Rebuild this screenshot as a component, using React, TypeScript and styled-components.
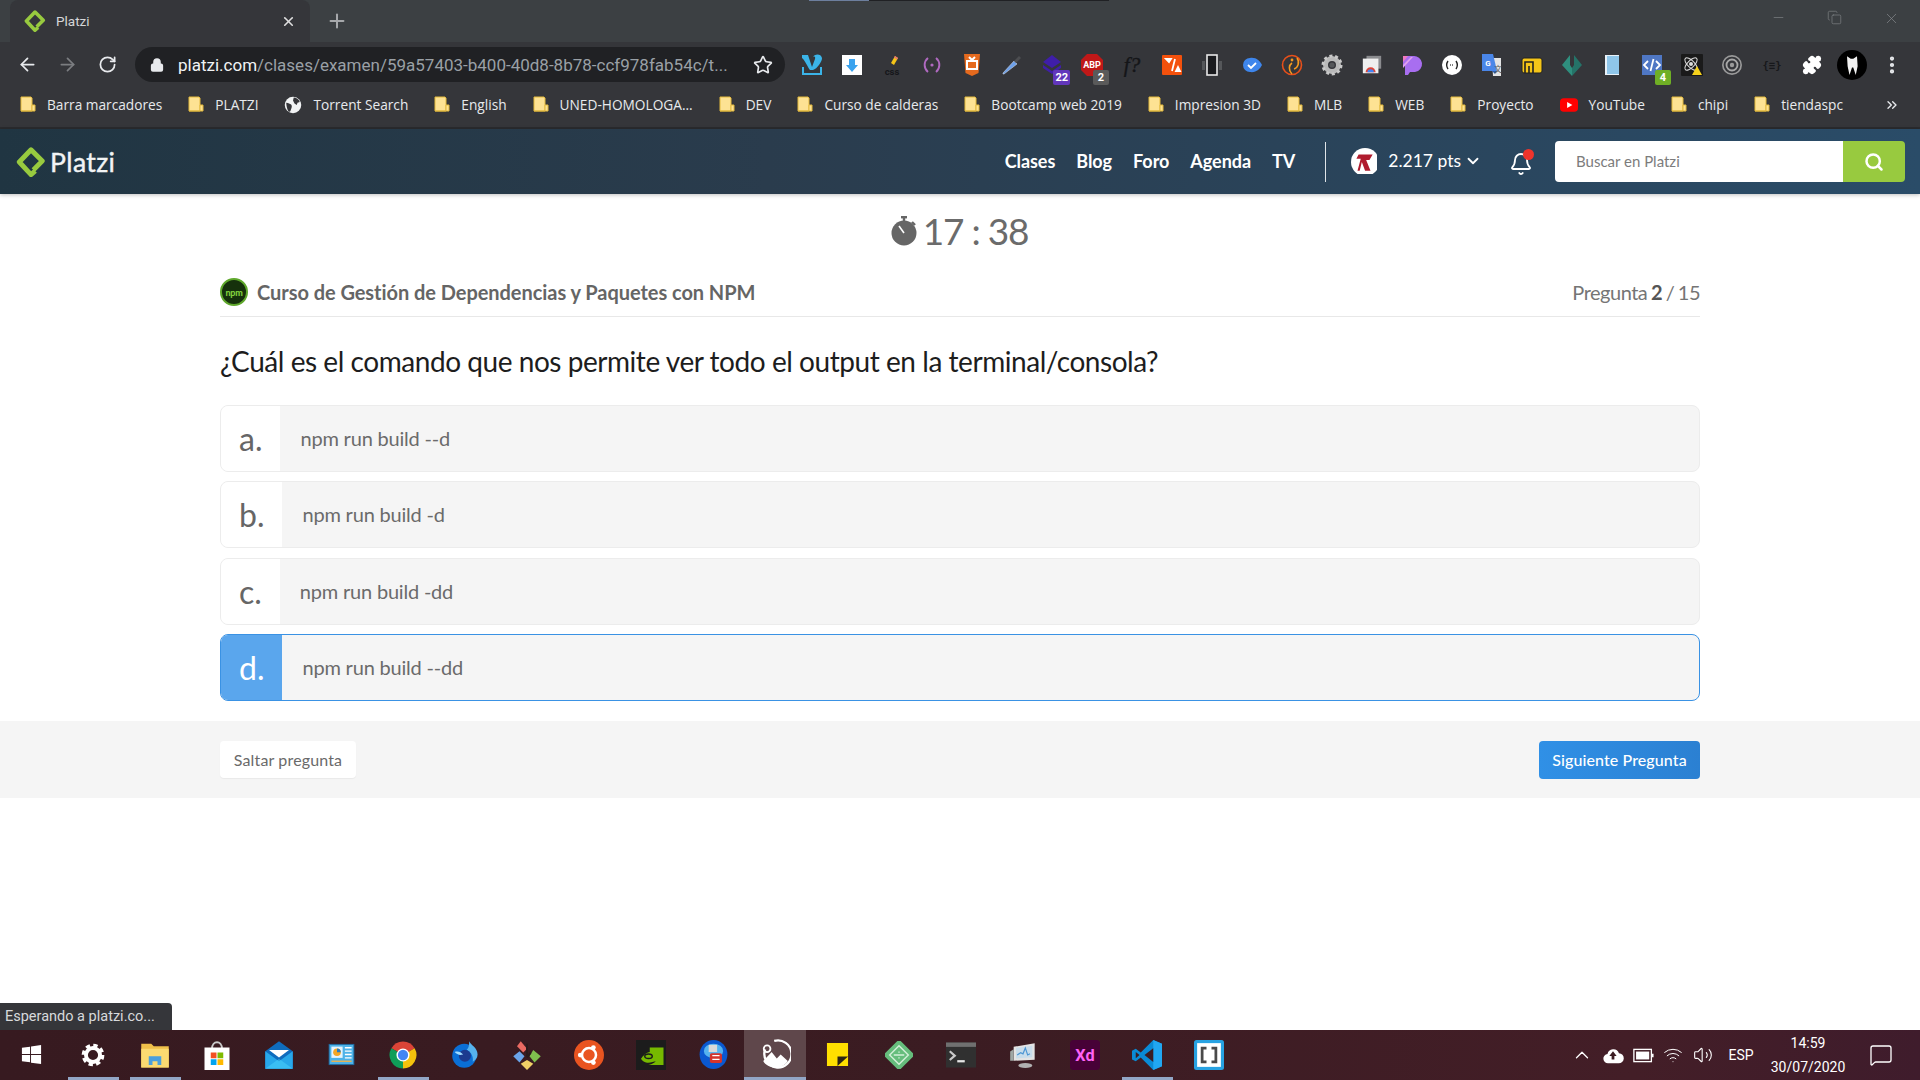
import React from "react";
import styled, { createGlobalStyle } from "styled-components";
import { ArrowLeft, ArrowRight, RotateCw, Lock, Star, Plus, X, Minus, Copy, ChevronDown, Bell, Search, Puzzle, MoreVertical, ChevronsRight, ChevronUp, Volume2, Wifi, MessageSquare } from "lucide-react";

const Global = createGlobalStyle`
  html, body { margin: 0; padding: 0; width: 1920px; height: 1080px; overflow: hidden; background: #fff; }
  * { box-sizing: border-box; }
  #root { width: 1920px; height: 1080px; }
`;

const Screen = styled.div`
  position: relative;
  width: 1920px;
  height: 1080px;
  display: flex;
  flex-direction: column;
  font-family: Lato, "Open Sans", sans-serif;
  background: #fff;
`;

const TabStrip = styled.div`
  position: relative;
  height: 42px;
  flex: none;
  background: #3c4043;
  display: flex;
  align-items: flex-end;
  padding-left: 10px;
`;

const LoadBar = styled.div`
  position: absolute;
  top: 0;
  left: 809px;
  width: 300px;
  height: 1px;
  background: linear-gradient(90deg, #6d7f9e 0 60px, #202124 60px);
`;

const Tab = styled.div`
  width: 300px;
  height: 42px;
  background: #35363a;
  border-radius: 8px 8px 0 0;
  display: flex;
  align-items: center;
  padding: 0 14px 0 14px;
  color: #d5d6d8;
  font-family: Roboto, sans-serif;
  font-size: 13.5px;
`;

const TabTitle = styled.span`
  flex: 1;
  margin-left: 10px;
`;

const NewTab = styled.div`
  margin-left: 16px;
  height: 42px;
  display: flex;
  align-items: center;
  color: #a6a8ab;
`;

const WindowControls = styled.div`
  margin-left: auto;
  height: 42px;
  display: flex;
  align-items: flex-start;
  color: #85888c;
  padding: 10px 20px 0 0;
  gap: 41px;
`;

const Toolbar = styled.div`
  height: 45px;
  flex: none;
  background: #35363a;
  display: flex;
  align-items: center;
  padding-left: 15px;
`;

const NavBtn = styled.div<{ $dim?: boolean }>`
  width: 24px;
  height: 24px;
  margin-right: 16px;
  display: flex;
  align-items: center;
  justify-content: center;
  color: ${(p) => (p.$dim ? "#7b7d80" : "#e8eaed")};
`;

const Omnibox = styled.div`
  width: 650px;
  height: 35px;
  border-radius: 18px;
  background: #202124;
  display: flex;
  align-items: center;
  padding: 0 12px 0 15px;
  font-family: Roboto, sans-serif;
  font-size: 17px;
  color: #9aa0a6;
  white-space: nowrap;
`;

const Url = styled.span`
  margin-left: 14px;
  flex: 1;
  overflow: hidden;
  b { font-weight: 400; color: #f1f3f4; }
`;

const Extensions = styled.div`
  display: flex;
  margin-left: 7px;
`;

const ExtSlot = styled.div`
  position: relative;
  width: 40px;
  height: 45px;
  display: flex;
  align-items: center;
  justify-content: center;
  color: #e8eaed;
`;

const Badge = styled.span<{ $bg: string; $right?: number }>`
  position: absolute;
  right: ${(p) => p.$right ?? 2}px;
  bottom: 2px;
  min-width: 16px;
  height: 15px;
  padding: 0 2px;
  border-radius: 2px;
  background: ${(p) => p.$bg};
  color: #fff;
  font-family: Roboto, sans-serif;
  font-size: 11px;
  font-weight: 700;
  line-height: 15px;
  text-align: center;
`;

const BookmarksBar = styled.div`
  height: 40px;
  flex: none;
  background: #35363a;
  display: flex;
  align-items: center;
  padding: 0 0 5px 20px;
  gap: 26px;
  font-family: "Open Sans", sans-serif;
  font-size: 13.7px;
  color: #e8eaed;
  white-space: nowrap;
`;

const Bookmark = styled.div`
  display: flex;
  align-items: center;
  gap: 11px;
`;

const BookmarkMore = styled.div`
  margin-left: auto;
  margin-right: 20px;
  display: flex;
  color: #e8eaed;
`;

const ChromeLine = styled.div`
  height: 2px;
  flex: none;
  background: #2a2b2e;
`;

const SiteHeader = styled.header`
  height: 65px;
  flex: none;
  display: flex;
  align-items: center;
  padding: 0 15px 0 16px;
  background: linear-gradient(90deg, #203542 0%, #2a3c4d 40%, #2a4c68 100%);
  box-shadow: 0 1px 4px rgba(0, 0, 0, 0.25);
  position: relative;
  color: #fff;
`;

const Brand = styled.div`
  display: flex;
  align-items: center;
  gap: 4px;
  font-size: 26.5px;
  font-weight: 400;
  color: #f2f4f5;
  letter-spacing: 0.4px;
  -webkit-text-stroke: 0.4px #f2f4f5;
`;

const SiteNav = styled.nav`
  margin-left: auto;
  margin-bottom: 2px;
  display: flex;
  gap: 21px;
  font-size: 18px;
  font-weight: 700;
  letter-spacing: -0.05px;
`;

const HeaderDivider = styled.div`
  width: 1px;
  height: 40px;
  margin: 0 25px 0 30px;
  background: #dfe4e8;
`;

const Points = styled.div`
  display: flex;
  align-items: center;
  font-size: 17.5px;
  gap: 11px;
  margin-bottom: 2px;
`;

const PointsValue = styled.span`
  display: flex;
  align-items: center;
  gap: 3px;
`;

const BellWrap = styled.div`
  position: relative;
  margin: 0 22px 0 27px;
  width: 24px;
  height: 28px;
  display: flex;
  align-items: flex-end;
  justify-content: center;
`;

const BellDot = styled.span`
  position: absolute;
  right: -1px;
  top: 1px;
  width: 11px;
  height: 11px;
  border-radius: 50%;
  background: #f0342c;
`;

const SearchBox = styled.div`
  width: 350px;
  height: 41px;
  display: flex;
  border-radius: 4px;
  overflow: hidden;
`;

const SearchInput = styled.div`
  flex: 1;
  background: #fff;
  color: #7c7c7c;
  font-size: 15px;
  display: flex;
  align-items: center;
  padding-left: 21px;
  padding-bottom: 1px;
`;

const SearchBtn = styled.div`
  width: 62px;
  background: #98ca3f;
  display: flex;
  align-items: center;
  justify-content: center;
  color: #fff;
`;

const Main = styled.main`
  flex: 1;
  min-height: 0;
  display: flex;
  flex-direction: column;
`;

const Timer = styled.div`
  height: 75px;
  padding-top: 12px;
  display: flex;
  justify-content: center;
  align-items: flex-start;
  gap: 5px;
  font-size: 37px;
  line-height: 50px;
  letter-spacing: -1.2px;
  color: #6b6b6b;
  margin-left: -2px;
`;

const TimerIcon = styled.div`
  padding-top: 1px;
  height: 50px;
`;

const Container = styled.div`
  width: 1480px;
  margin: 0 auto;
`;

const CourseRow = styled.div`
  height: 48px;
  display: flex;
  align-items: center;
  justify-content: space-between;
  border-bottom: 1px solid #e8e8e8;
  padding-bottom: 1px;
`;

const CourseName = styled.div`
  display: flex;
  align-items: center;
  gap: 9px;
  font-size: 20px;
  font-weight: 700;
  color: #656565;
  letter-spacing: -0.05px;
`;

const NpmBadge = styled.span`
  width: 28px;
  height: 28px;
  border-radius: 50%;
  background: #16310c;
  border: 2px solid #5fa82c;
  color: #7fce3c;
  font-size: 9px;
  font-weight: 900;
  letter-spacing: -0.2px;
  display: flex;
  align-items: center;
  justify-content: center;
`;

const Progress = styled.div`
  font-size: 20px;
  color: #757575;
  letter-spacing: -0.5px;
  word-spacing: -1px;
  b { color: #555; }
`;

const Question = styled.h1`
  margin: 0;
  height: 88px;
  padding-top: 23px;
  font-size: 28px;
  line-height: 42px;
  font-weight: 400;
  color: #1d1d1d;
  letter-spacing: -0.45px;
`;

const Options = styled.div`
  display: flex;
  flex-direction: column;
  gap: 9.3px;
`;

const Option = styled.div<{ $selected?: boolean }>`
  height: 67px;
  display: flex;
  background: #f5f5f5;
  border: 1px solid ${(p) => (p.$selected ? "#3a92e4" : "#ececec")};
  border-radius: 8px;
  overflow: hidden;
`;

const Letter = styled.div<{ $selected?: boolean }>`
  padding: 0 18px;
  display: flex;
  align-items: center;
  justify-content: center;
  font-size: 32px;
  color: ${(p) => (p.$selected ? "#fff" : "#666")};
  background: ${(p) => (p.$selected ? "#5aa6ed" : "#fff")};
`;

const Answer = styled.div`
  flex: 1;
  display: flex;
  align-items: center;
  padding: 0 0 1px 20px;
  font-size: 20px;
  letter-spacing: -0.2px;
  color: #6b6b6b;
`;

const Footer = styled.div`
  margin-top: 20px;
  height: 77px;
  background: #f5f5f5;
  display: flex;
  align-items: flex-start;
`;

const FooterInner = styled(Container)`
  padding-top: 20px;
  display: flex;
  justify-content: space-between;
  align-items: flex-start;
`;

const SkipBtn = styled.div`
  width: 136px;
  height: 37px;
  background: #fff;
  border-radius: 4px;
  box-shadow: 0 1px 1px rgba(0, 0, 0, 0.05);
  font-size: 16px;
  letter-spacing: 0.15px;
  color: #6a6a6a;
  display: flex;
  align-items: center;
  justify-content: center;
`;

const NextBtn = styled.div`
  width: 161px;
  height: 38px;
  background: linear-gradient(90deg, #3090e6, #2b80d2);
  border-radius: 4px;
  font-size: 16px;
  font-weight: 500;
  letter-spacing: 0.1px;
  color: #fff;
  display: flex;
  align-items: center;
  justify-content: center;
`;

const StatusBubble = styled.div`
  position: absolute;
  left: 0;
  bottom: 50px;
  width: 172px;
  height: 27px;
  background: #35363a;
  border-radius: 0 4px 0 0;
  color: #d8dadc;
  font-family: Roboto, sans-serif;
  font-size: 14.5px;
  line-height: 27px;
  padding-left: 5px;
  white-space: nowrap;
`;

const Taskbar = styled.footer`
  height: 50px;
  flex: none;
  display: flex;
  background: linear-gradient(90deg, #371a20 0%, #3b1c22 50%, #431e27 85%, #3f1c2c 100%);
  color: #fff;
`;

const TaskSlot = styled.div<{ $open?: boolean; $active?: boolean }>`
  position: relative;
  width: 62px;
  height: 50px;
  display: flex;
  align-items: center;
  justify-content: center;
  padding-bottom: 1px;
  background: ${(p) => (p.$active ? "#5f474b" : "transparent")};
  &::after {
    content: "";
    display: ${(p) => (p.$open || p.$active ? "block" : "none")};
    position: absolute;
    left: ${(p) => (p.$active ? 0 : 5.5)}px;
    right: ${(p) => (p.$active ? 0 : 5.5)}px;
    bottom: 0;
    height: 3px;
    background: #92a6c6;
  }
`;

const Tray = styled.div`
  margin-left: auto;
  display: flex;
  align-items: center;
  color: #fff;
  padding-right: 27px;
`;

const TrayIcon = styled.div<{ $w: number }>`
  width: ${(p) => p.$w}px;
  display: flex;
  justify-content: center;
`;

const TrayLang = styled.div`
  width: 46px;
  text-align: center;
  font-family: Roboto, sans-serif;
  font-size: 14px;
`;

const Clock = styled.div`
  width: 88px;
  text-align: center;
  font-family: Roboto, sans-serif;
  font-size: 14px;
  line-height: 24px;
`;

const Notif = styled.div`
  margin-left: 17px;
  display: flex;
`;

const Folder = () => (
  <svg width="16" height="18" viewBox="0 0 16 18">
    <path d="M1 1h10l1 1v13H1z" fill="#fde293" stroke="#e3b93c" strokeWidth="1" />
    <path d="M1 15h14V9h-3v6" fill="#fde293" stroke="#e3b93c" strokeWidth="1" />
  </svg>
);

const PlatziMark = ({ size }: { size: number }) => (
  <svg width={size} height={size} viewBox="0 0 32 32">
    <path d="M20.5 25.5 16 29.5 3.5 16 16 3 28 15 18.5 24.5" fill="none" stroke="#98ca3f" strokeWidth="5.2" strokeLinejoin="round" />
  </svg>
);

const S = (c: React.ReactNode, size = 24) => (
  <svg width={size} height={size} viewBox="0 0 24 24">{c}</svg>
);

const extIcons: React.ReactNode[] = [
  S(<><path d="M2 2h6l4 12 3-8c.6-2-.3-3-2-2 1-3 8-4 9 1 .5 3-5 11-9 12h-3C8 15 5 7 2 5z" fill="#3bb4e8" /><path d="M2 14v8h20v-8h-2v6H4v-6z" fill="#3bb4e8" /></>),
  S(<><rect x="2" y="2" width="20" height="20" fill="#fff" /><path d="M9 6h6v6h3l-6 7-6-7h3z" fill="#3aa3ee" /></>),
  S(<><path d="M15 3l3 2-4 7-3-2z" fill="#f5c518" /><path d="M15 3l3 2-1 1.5-3-2z" fill="#e57373" /><text x="12" y="22" fontFamily="Roboto" fontSize="9.5" fontWeight="700" fill="#15161a" textAnchor="middle">css</text></>),
  S(<><circle cx="12" cy="12" r="1.6" fill="#b06ac0" /><path d="M8 5a9 9 0 0 0 0 14M16 5a9 9 0 0 1 0 14" stroke="#b06ac0" strokeWidth="1.9" fill="none" /></>),
  S(<><path d="M4 1h16l-1.5 19L12 23l-6.5-3z" fill="#e56a1e" /><rect x="7" y="8" width="10" height="8" fill="none" stroke="#fff" strokeWidth="2" /><path d="M9 4l3 3 3-3" stroke="#fff" strokeWidth="2" fill="none" /></>),
  S(<><path d="M4 21l-1 0 0-1 11-12 3 3z" fill="#6da0ea" stroke="#c8d4e4" strokeWidth=".6" /><path d="M14 8l5-5 2 2-5 5z" fill="#4c4d50" /></>),
  S(<><path d="M12 2 21 9l-9 6-9-6z" fill="#3f1ea8" /><path d="M3 12l9 6 9-6v3l-9 6-9-6z" fill="#3f1ea8" /></>),
  S(<><path d="M7 1h10l6 6v10l-6 6H7l-6-6V7z" fill="#c01818" /><text x="12" y="15" fontFamily="Roboto" fontSize="9" fontWeight="700" fill="#fff" textAnchor="middle">ABP</text></>),
  S(<text x="12" y="19" fontFamily="Liberation Serif" fontStyle="italic" fontSize="21" fill="#141518" stroke="#141518" strokeWidth=".35" textAnchor="middle">f?</text>),
  S(<><rect x="2" y="2" width="20" height="20" rx="1" fill="#f4510c" /><path d="M6 6h5l-2 3zM12 18l3-12M16 18h4l-2-4z" stroke="#fff" strokeWidth="1.8" fill="none" /></>),
  S(<><rect x="7" y="2" width="10" height="20" fill="#1a1b1e" stroke="#e8e8e8" strokeWidth="1.6" /><rect x="2" y="8" width="3" height="9" fill="#55575a" /><rect x="19" y="8" width="3" height="9" fill="#55575a" /></>),
  S(<><path d="M10 5c6-1 10 3 12 7-2 4-6 8-12 7a7 7 0 0 1 0-14z" fill="#3e86ec" /><path d="M8 12l3 3 5-5" stroke="#fff" strokeWidth="1.8" fill="none" /></>),
  S(<><circle cx="12" cy="12" r="9.5" fill="none" stroke="#e8501a" strokeWidth="1.6" /><path d="M12 21c-4-4-3-9 0-11M17 5c3 4 1 10-3 11" fill="none" stroke="#f59a1f" strokeWidth="1.6" /><circle cx="12" cy="7" r="1.4" fill="#f59a1f" /></>),
  S(<><circle cx="12" cy="12" r="6.5" fill="none" stroke="#b9b9b9" strokeWidth="5" /><circle cx="12" cy="12" r="9" fill="none" stroke="#c9c9c9" strokeWidth="3" strokeDasharray="3 2.65" /><circle cx="12" cy="12" r="2.6" fill="#55575a" /></>),
  S(<><rect x="6" y="2" width="16" height="14" fill="#8a8b8e" /><rect x="2" y="5" width="17" height="16" fill="#efefef" /><path d="M5 20a5.5 5.5 0 0 1 11 0z" fill="#db4437" /><path d="M7 20a3.5 3.5 0 0 1 7 0z" fill="#4285f4" /></>, 22),
  S(<><path d="M3 3h10a8 8 0 0 1 2 16H10l-2 3H5V12H3z" fill="#a86ef0" /><path d="M3 3h5L3 9z" fill="#f07ac0" /><path d="M3 12l8-8h2L3 15z" fill="#e0a0f0" /></>),
  S(<><circle cx="12" cy="12" r="10" fill="#fff" /><path d="M8 8c-2 3-2 5 0 8M16 8c2 3 2 5 0 8" stroke="#222" strokeWidth="1.4" fill="none" /><path d="M10 12h4" stroke="#555" strokeWidth="1.6" strokeDasharray="1 1" /></>),
  S(<><path d="M12 5h9v18h-8z" fill="#e4e4e4" /><path d="M2 1h11l4 17H2z" fill="#4a86e8" /><path d="M15 21l-3-3h5z" fill="#2d5fb6" /><text x="8" y="13" fontFamily="Roboto" fontSize="8" fontWeight="700" fill="#fff" textAnchor="middle">G</text><text x="18" y="19" fontFamily="Noto Sans CJK SC" fontSize="7.5" fill="#555" textAnchor="middle">文</text></>),
  S(<><rect x="2" y="5" width="20" height="15" rx="2" fill="#f5c518" stroke="#222" strokeWidth="1" /><path d="M5 20V9h8v11M9 20v-7" stroke="#222" strokeWidth="1.6" fill="none" /></>),
  S(<><path d="M10 2 2 12l10 11V15l-2-3z" fill="#2f8f7e" /><path d="M14 2l8 10-10 11V15l2-3z" fill="#257368" /></>),
  S(<><rect x="5" y="2" width="14" height="20" fill="#e8f1f8" /><rect x="7" y="3" width="12" height="18" fill="#8fc6ea" /></>),
  S(<><rect x="2" y="2" width="20" height="20" fill="#4f77c4" /><path d="M8 8l-4 4 4 4M16 8l4 4-4 4M13.5 6l-3 12" stroke="#fff" strokeWidth="1.8" fill="none" /></>),
  S(<><rect x="1" y="1" width="22" height="22" rx="1" fill="#1a1a1a" /><ellipse cx="11" cy="11" rx="8" ry="3.4" fill="none" stroke="#ddd" strokeWidth="1" transform="rotate(45 11 11)" /><ellipse cx="11" cy="11" rx="8" ry="3.4" fill="none" stroke="#ddd" strokeWidth="1" transform="rotate(-45 11 11)" /><circle cx="11" cy="11" r="2" fill="#ddd" /><path d="M17 13l5 9H12z" fill="#f7d21c" /></>),
  S(<><circle cx="12" cy="12" r="10" fill="none" stroke="#9a9a9a" strokeWidth="1.8" /><circle cx="12" cy="12" r="6" fill="none" stroke="#a8a8a8" strokeWidth="2" /><circle cx="12" cy="12" r="2.4" fill="#9a9a9a" /></>, 22),
  S(<text x="12" y="16" fontFamily="DejaVu Sans Mono" fontSize="10.5" fontWeight="700" fill="#17181b" textAnchor="middle">{"{≡}"}</text>),
];

const BellIcon = <Bell size={24} strokeWidth={1.8} color="#fff" />;

const taskIcons: { node: React.ReactNode; open?: boolean; active?: boolean }[] = [
  { node: S(<path d="M2 5l8.5-1.2V11.5H2zM11.5 3.6 22 2v9.5H11.5zM2 12.5h8.5v7.7L2 19zM11.5 12.5H22V22l-10.5-1.5z" fill="#fff" />, 23) },
  { open: true, node: S(<><circle cx="12" cy="12" r="6.5" fill="none" stroke="#fff" strokeWidth="3.6" /><circle cx="12" cy="12" r="9" fill="none" stroke="#fff" strokeWidth="3" strokeDasharray="4 3.07" /></>, 26) },
  { open: true, node: S(<><path d="M1 3h8l2 2h12v17H1z" fill="#f0c04a" /><path d="M1 7h22v15H1z" fill="#fbda71" /><path d="M7 20v-7h10v7h-3v-3h-4v3z" fill="#4a9fdd" /></>, 30) },
  { node: S(<><path d="M8 7c0-7 8-7 8 0" fill="none" stroke="#c9c9c9" strokeWidth="1.5" /><rect x="2" y="6" width="20" height="18" fill="#fff" /><rect x="7" y="10" width="4.6" height="4.6" fill="#f25022" /><rect x="12.4" y="10" width="4.6" height="4.6" fill="#7fba00" /><rect x="7" y="15.4" width="4.6" height="4.6" fill="#00a4ef" /><rect x="12.4" y="15.4" width="4.6" height="4.6" fill="#ffb900" /></>, 30) },
  { node: S(<><path d="M1 9 12 1l11 8v14H1z" fill="#0f6cbd" /><path d="M1 9 12 17 23 9v14H1z" fill="#28a8ea" /><path d="M4 8h16l-8 6z" fill="#fff" /><path d="M1 23 12 15l11 8z" fill="#50d9ff" opacity=".45" /></>, 30) },
  { node: S(<><rect x="1" y="3" width="22" height="18" fill="#4db2e8" stroke="#1d6aa0" strokeWidth=".8" /><rect x="3" y="5" width="10" height="10" fill="#e6f4fc" /><circle cx="8" cy="10" r="3.4" fill="#f5a623" /><path d="M8 10V6.6A3.4 3.4 0 0 1 11.4 10z" fill="#2a7cc0" /><path d="M15 6h6M15 9h6M15 12h6M15 15h6" stroke="#fff" strokeWidth="1.2" /><path d="M3 18h18" stroke="#f0b34a" strokeWidth="1.2" /></>, 27) },
  { open: true, node: S(<><path d="M12 12 2.04 6.25A11.5 11.5 0 0 1 21.96 6.25z" fill="#db4437" /><path d="M12 12 21.96 6.25A11.5 11.5 0 0 1 12 23.5z" fill="#f4c20d" /><path d="M12 12 12 23.5A11.5 11.5 0 0 1 2.04 6.25z" fill="#0f9d58" /><circle cx="12" cy="12" r="5.6" fill="#fff" /><circle cx="12" cy="12" r="4.4" fill="#4285f4" /></>, 28) },
  { node: S(<><circle cx="11" cy="13" r="10" fill="#0a6fd6" /><path d="M15 1c1 3 7 5 7 11 0 3-2 5-4 6 1-6-3-9-5-10 2-2 2-4 2-7z" fill="#56b3ee" /><circle cx="11.5" cy="13" r="5" fill="#1c3a8f" /><path d="M3 10c3-1 5 0 7 2-3 1-5 0-7-2z" fill="#9fdcff" /></>, 29) },
  { node: S(<><path d="M7 1l5 6-3 3-5-5z" fill="#e96a62" /><path d="M6 9l4 4-4 5-5-5z" fill="#6ba4ea" /><path d="M17 8l6 5-5 5-4-5z" fill="#7fbf4e" /><path d="M12 16l5 3-5 5-5-5z" fill="#f0d066" /><path d="M12 3v10M15 10l-3 4" stroke="#2a1a1c" strokeWidth="1.6" /></>, 30) },
  { node: S(<><circle cx="12" cy="12" r="12" fill="#e95420" /><circle cx="12" cy="12" r="5.6" fill="none" stroke="#fff" strokeWidth="2" /><circle cx="5" cy="12" r="1.9" fill="#fff" /><circle cx="15.5" cy="6" r="1.9" fill="#fff" /><circle cx="15.5" cy="18" r="1.9" fill="#fff" /></>, 30) },
  { node: S(<><rect x="0" y="0" width="24" height="24" fill="#1c1c1c" /><path d="M11 6h11v14H10c4-1 6-3 6-3-2 0-5 2-8 1-3-1-4-3-4-3s3-5 7-5.5z" fill="#76b900" /><ellipse cx="10" cy="13" rx="3" ry="1.8" fill="none" stroke="#1c1c1c" strokeWidth="1.2" /></>, 30) },
  { node: S(<><ellipse cx="12" cy="12" rx="11.5" ry="12" fill="#0a58d0" /><ellipse cx="12" cy="9" rx="8" ry="6" fill="#54b3f0" /><rect x="8" y="4" width="7" height="6" fill="#d9d9d9" /><rect x="9" y="11" width="10" height="8" rx="1.5" fill="#d4342c" /><path d="M11 13h6M11 16h6" stroke="#fff" strokeWidth="1.1" /></>, 29) },
  { active: true, node: S(<><path d="M4 8a10.5 10.5 0 1 0 7-6.5" fill="none" stroke="#fff" strokeWidth="1.8" /><path d="M2.5 17 9 10l4 5 3-3 5.5 5c-2 3-5 5-9.5 5-4 0-8-2-9.5-5z" fill="#fff" /><circle cx="5.5" cy="7.5" r="2.6" fill="none" stroke="#fff" strokeWidth="1.4" /></>, 31) },
  { node: S(<><rect x="1" y="0" width="22" height="24" fill="#ffdf00" /><path d="M12 24V14h11z" fill="#2c2413" /></>, 23) },
  { node: S(<><path d="M12 0l12 12-12 12L0 12z" fill="#66bd7c" stroke="#66bd7c" strokeWidth="2" strokeLinejoin="round" /><path d="M12 4l8 8-8 8-8-8zM7.5 12h9M12 9v1M12 14v1" fill="none" stroke="#d4efd9" strokeWidth="1.2" /></>, 28) },
  { node: S(<><rect x="0" y="2" width="24" height="20" fill="#303030" /><rect x="0" y="2" width="24" height="3.5" fill="#707070" /><path d="M3 9l4 3.5-4 3.5" stroke="#c9c9c9" strokeWidth="1.8" fill="none" /><path d="M9 17h6" stroke="#e6e6e6" strokeWidth="1.8" /></>, 30) },
  { node: S(<><path d="M4 5 22 2v14L4 17z" fill="#e4e4e4" /><path d="M6 6l14-2v10L6 15z" fill="#c9ddeb" /><path d="M7 12l3-2 2 1 2-5 2 6 2-1" stroke="#4d96d4" strokeWidth="1" fill="none" /><ellipse cx="14" cy="21" rx="6" ry="2.2" fill="#b0b0b0" /><path d="M1 9l3-2v10H1z" fill="#9fa7a5" /></>, 28) },
  { node: S(<><rect width="24" height="24" rx="3" fill="#470137" /><text x="12" y="17" fontFamily="Roboto" fontWeight="700" fontSize="13" fill="#ff61f6" textAnchor="middle">Xd</text></>, 30) },
  { open: true, node: S(<><path d="M17 0 7 10 3 7 0 8.5v7L3 17l4-3 10 10 7-3V3z" fill="#0a8bd6" /><path d="M17 0l7 3v18l-7 3z" fill="#21a7f2" /><path d="M17 6.5 10 12l7 5.5z" fill="#3b1c22" /><path d="M3 9.5 6 12l-3 2.5z" fill="#3b1c22" /></>, 30) },
  { node: S(<><rect width="24" height="24" rx="2" fill="#27a2e2" /><rect x="2.5" y="2.5" width="19" height="19" fill="#fff" /><path d="M10 6.5H6.5v11H10M14 6.5h3.5v11H14" stroke="#4a4a4a" strokeWidth="2.2" fill="none" /></>, 30) },
];

const exts = extIcons.map((node, i) => {
  let badge: React.ReactNode = null;
  if (i === 6) badge = <Badge $bg="#6236bb">22</Badge>;
  if (i === 7) badge = <Badge $bg="#5a5a5a" $right={3}>2</Badge>;
  if (i === 21) badge = <Badge $bg="#6faf25" $right={1}>4</Badge>;
  return (
    <ExtSlot key={i}>
      {node}
      {badge}
    </ExtSlot>
  );
});

const bookmarks = ["Barra marcadores", "PLATZI", "Torrent Search", "English", "UNED-HOMOLOGA...", "DEV", "Curso de calderas", "Bootcamp web 2019", "Impresion 3D", "MLB", "WEB", "Proyecto", "YouTube", "chipi", "tiendaspc"];

const options = [
  { l: "a.", t: "npm run build --d" },
  { l: "b.", t: "npm run build -d" },
  { l: "c.", t: "npm run build -dd" },
  { l: "d.", t: "npm run build --dd", s: true },
];

export default function App() {
  return (
    <Screen>
      <Global />
      <TabStrip>
        <LoadBar />
        <Tab>
          <PlatziMark size={22} />
          <TabTitle>Platzi</TabTitle>
          <X size={15} strokeWidth={2.6} color="#e0e0e0" />
        </Tab>
        <NewTab>
          <Plus size={22} strokeWidth={2.2} />
        </NewTab>
        <WindowControls>
          <Minus size={15} strokeWidth={1} />
          <Copy size={15} strokeWidth={1} />
          <X size={17} strokeWidth={1} />
        </WindowControls>
      </TabStrip>
      <Toolbar>
        <NavBtn><ArrowLeft size={21} strokeWidth={2} /></NavBtn>
        <NavBtn $dim><ArrowRight size={21} strokeWidth={2} /></NavBtn>
        <NavBtn><RotateCw size={19} strokeWidth={2.2} /></NavBtn>
        <Omnibox>
          <Lock size={14} strokeWidth={3} color="#e8eaed" fill="#e8eaed" />
          <Url><b>platzi.com</b>/clases/examen/59a57403-b400-40d8-8b78-ccf978fab54c/t...</Url>
          <Star size={20} strokeWidth={2} color="#e8eaed" />
        </Omnibox>
        <Extensions>
          {exts}
          <ExtSlot><Puzzle size={20} fill="#fff" color="#fff" /></ExtSlot>
          <ExtSlot>
            {S(<><circle cx="12" cy="12" r="12" fill="#000" /><path d="M8 5l3 2h2l3-2 .5 8-1.5 7-2-6h-1l-2 6-1.5-7z" fill="#f2f2f2" /></>, 30)}
          </ExtSlot>
          <ExtSlot><MoreVertical size={22} strokeWidth={2.6} /></ExtSlot>
        </Extensions>
      </Toolbar>
      <BookmarksBar>
        {bookmarks.map((b) => (
          <Bookmark key={b}>
            {b === "Torrent Search" ? (
              S(<><circle cx="12" cy="12" r="11" fill="#f1f3f4" /><path d="M3 9c3 0 5 2 6 2s2 3 1 5-1 5-3 5-4-8-4-12zM13 2c3 0 7 2 8 6l-3 1-1 3-3-2-2-4z" fill="#35363a" /></>, 18)
            ) : b === "YouTube" ? (
              S(<><rect x="0" y="3" width="24" height="18" rx="5" fill="#f00" /><path d="M9.5 8v8l7-4z" fill="#fff" /></>, 18)
            ) : (
              <Folder />
            )}
            <span>{b}</span>
          </Bookmark>
        ))}
        <BookmarkMore><ChevronsRight size={16} strokeWidth={2} /></BookmarkMore>
      </BookmarksBar>
      <ChromeLine />
      <SiteHeader>
        <Brand>
          <PlatziMark size={30} />
          Platzi
        </Brand>
        <SiteNav>
          <span>Clases</span>
          <span>Blog</span>
          <span>Foro</span>
          <span>Agenda</span>
          <span>TV</span>
        </SiteNav>
        <HeaderDivider />
        <Points>
          {S(<><circle cx="13" cy="13" r="13" fill="#fff" /><path d="M7 6h13l-3 5h-3l4 10h-5l-3-8-2 8H6l3-11H5z" fill="#b01c2e" /></>, 26)}
          <PointsValue>2.217 pts <ChevronDown size={18} strokeWidth={2.4} /></PointsValue>
        </Points>
        <BellWrap>
          {BellIcon}
          <BellDot />
        </BellWrap>
        <SearchBox>
          <SearchInput>Buscar en Platzi</SearchInput>
          <SearchBtn><Search size={20} strokeWidth={3} /></SearchBtn>
        </SearchBox>
      </SiteHeader>
      <Main>
        <Timer>
          <TimerIcon>
            <svg width="28" height="30" viewBox="0 0 28 30">
              <circle cx="14" cy="17" r="12.5" fill="#666" />
              <rect x="11" y="0" width="6" height="2.4" fill="#666" />
              <rect x="12.8" y="2" width="2.4" height="4" fill="#666" />
              <path d="M22 6l3 3" stroke="#666" strokeWidth="2.4" />
              <path d="M9 10l5 7" stroke="#fff" strokeWidth="1.6" />
            </svg>
          </TimerIcon>
          <span>17 : 38</span>
        </Timer>
        <Container>
          <CourseRow>
            <CourseName>
              <NpmBadge>npm</NpmBadge>
              Curso de Gestión de Dependencias y Paquetes con NPM
            </CourseName>
            <Progress>Pregunta <b>2</b> / 15</Progress>
          </CourseRow>
          <Question>¿Cuál es el comando que nos permite ver todo el output en la terminal/consola?</Question>
          <Options>
            {options.map((o) => (
              <Option key={o.l} $selected={o.s}>
                <Letter $selected={o.s}>{o.l}</Letter>
                <Answer>{o.t}</Answer>
              </Option>
            ))}
          </Options>
        </Container>
        <Footer>
          <FooterInner>
            <SkipBtn>Saltar pregunta</SkipBtn>
            <NextBtn>Siguiente Pregunta</NextBtn>
          </FooterInner>
        </Footer>
      </Main>
      <StatusBubble>Esperando a platzi.co...</StatusBubble>
      <Taskbar>
        {taskIcons.map((t, i) => (
          <TaskSlot key={i} $open={t.open} $active={t.active}>{t.node}</TaskSlot>
        ))}
        <Tray>
          <TrayIcon $w={32}><ChevronUp size={22} strokeWidth={1.4} /></TrayIcon>
          <TrayIcon $w={30}>
            {S(<><path d="M7 21a5 5 0 0 1-1-10 6.5 6.5 0 0 1 12.5-1A5.5 5.5 0 0 1 18 21z" fill="#fff" /><path d="M12 8l4 5h-2.5v4h-3v-4H8z" fill="#3b1c22" /></>, 22)}
          </TrayIcon>
          <TrayIcon $w={30}>
            {S(<><rect x="1" y="5" width="20" height="14" fill="none" stroke="#fff" strokeWidth="1.5" /><rect x="3.5" y="7.5" width="15" height="9" fill="#fff" /><rect x="21.5" y="10" width="2" height="4" fill="#fff" /></>, 21)}
          </TrayIcon>
          <TrayIcon $w={30}><Wifi size={20} strokeWidth={1.2} /></TrayIcon>
          <TrayIcon $w={30}><Volume2 size={20} strokeWidth={1.3} /></TrayIcon>
          <TrayLang>ESP</TrayLang>
          <Clock>14:59<br />30/07/2020</Clock>
          <Notif><MessageSquare size={24} strokeWidth={1.3} /></Notif>
        </Tray>
      </Taskbar>
    </Screen>
  );
}
